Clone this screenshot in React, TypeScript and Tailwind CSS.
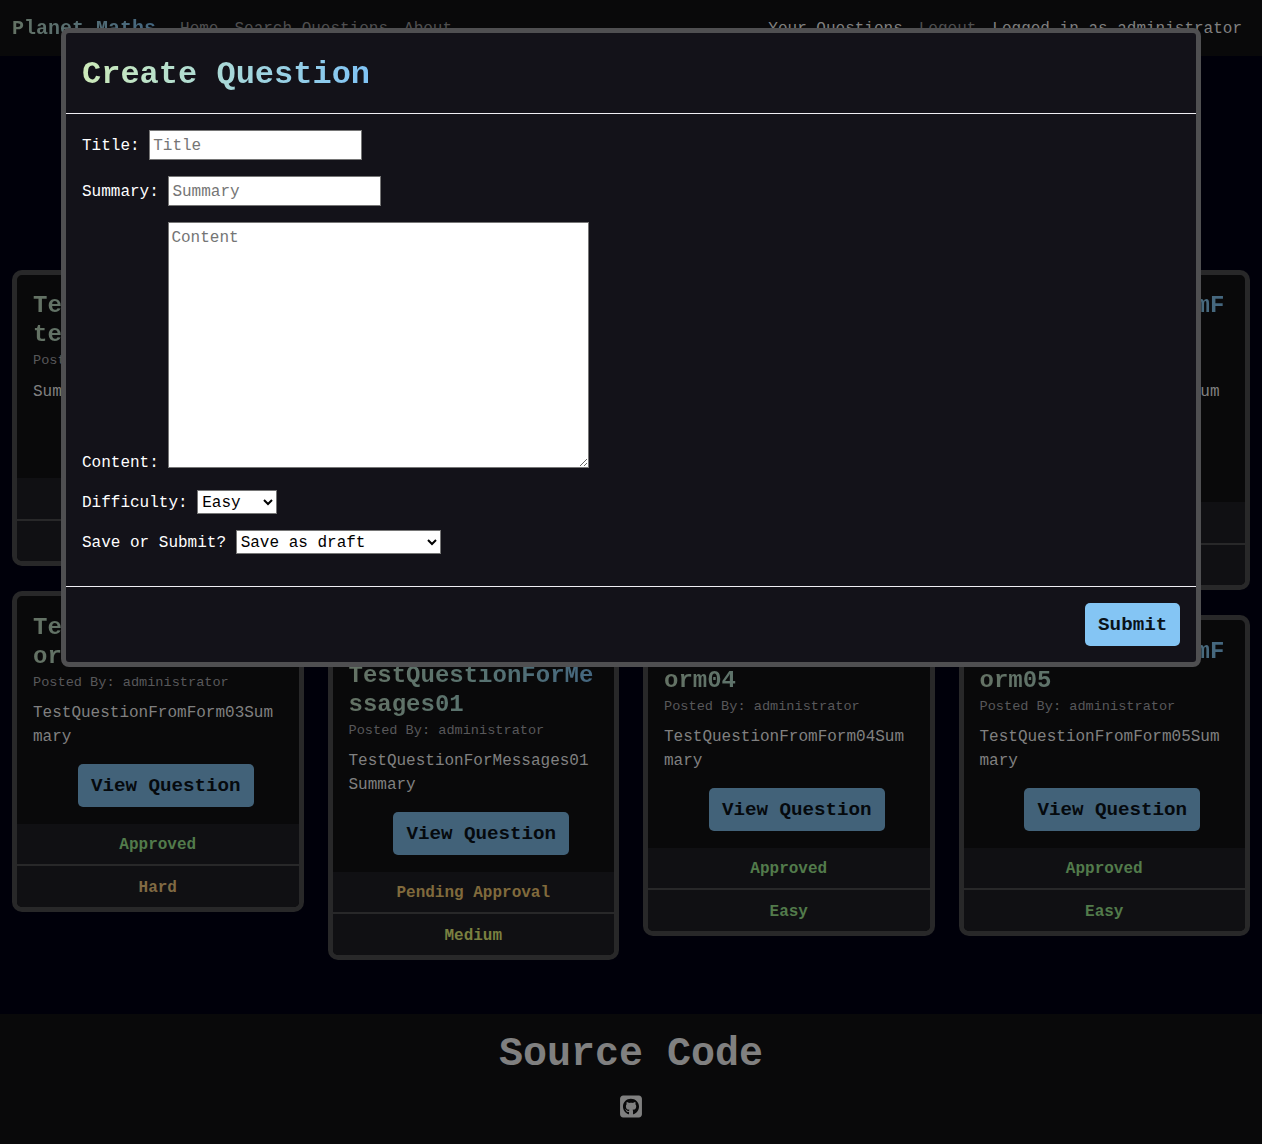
import { FaSquareGithub } from "react-icons/fa6";

type Question = {
  title: string;
  summary: string;
  status: string;
  level: string;
};

const columns: Question[][] = [
  [
    { title: "TestQuestionUpda test", summary: "Summary", status: "Approved", level: "Easy" },
    { title: "TestQuestionFromForm03", summary: "TestQuestionFromForm03Summary", status: "Approved", level: "Hard" },
  ],
  [
    {
      title: "TestQuestionFromForm01",
      summary: "TestQuestionFromForm01Summary for the first question",
      status: "Approved",
      level: "Easy",
    },
    {
      title: "TestQuestionForMessages01",
      summary: "TestQuestionForMessages01 Summary",
      status: "Pending Approval",
      level: "Medium",
    },
  ],
  [
    { title: "TestQuestionFromForm02", summary: "TestQuestionFromForm02Summary", status: "Approved", level: "Easy" },
    { title: "TestQuestionFromForm04", summary: "TestQuestionFromForm04Summary", status: "Approved", level: "Easy" },
  ],
  [
    { title: "TestQuestionFromForm", summary: "TestQuestionFromForm00Summary", status: "Approved", level: "Easy" },
    { title: "TestQuestionFromForm05", summary: "TestQuestionFromForm05Summary", status: "Approved", level: "Easy" },
  ],
];

const tones: Record<string, string> = {
  Approved: "text-[#527b4b]",
  Easy: "text-[#527b4b]",
  Medium: "text-[#7a8040]",
  Hard: "text-[#806a43]",
  "Pending Approval": "text-[#806a3c]",
};

function QuestionCard({ q }: { q: Question }) {
  return (
    <article className="overflow-hidden rounded-[10px] border-[5px] border-[#282829] bg-[#09090a]">
      <div className="px-4 pt-4 pb-[16.8px]">
        <h5 className="h-[57.6px] break-all bg-linear-to-r from-[#647264] via-[#59736f] to-[#436680] bg-clip-text pt-[1.4px] text-2xl leading-[28.8px] font-bold text-transparent">
          {q.title}
        </h5>
        <h6 className="h-[31.4px] pt-[0.8px] text-[13.6px] leading-6 text-[#58585a]">Posted By: administrator</h6>
        <p className="mb-[14.6px] break-all text-[#808080]">{q.summary}</p>
        <div className="flex justify-center pl-4">
          <button className="h-[43px] rounded-[5px] bg-[#426279] px-[13px] pt-[2px] text-[19.2px] font-bold text-[#05090d]">
            View Question
          </button>
        </div>
      </div>
      <div className={`flex h-[40.3px] items-center justify-center bg-[#101013] pt-[2px] font-bold ${tones[q.status]}`}>
        {q.status}
      </div>
      <div
        className={`flex h-[42.7px] items-center justify-center border-t-2 border-[#282829] bg-[#101013] pt-[4px] font-bold ${tones[q.level]}`}
      >
        {q.level}
      </div>
    </article>
  );
}

function Navbar() {
  return (
    <nav className="flex h-14 items-center justify-between bg-[#09090a] pt-[2px] pr-5 pl-3 text-[#4f4f50]">
      <div className="flex items-center gap-4">
        <span className="mr-2 bg-linear-to-r from-[#647264] to-[#436680] bg-clip-text text-xl font-bold text-transparent">
          Planet Maths
        </span>
        <a>Home</a>
        <a>Search Questions</a>
        <a>About</a>
      </div>
      <div className="flex items-center gap-4">
        <a className="text-[#808080]">Your Questions</a>
        <a>Logout</a>
        <span className="text-[#808080]">Logged in as administrator</span>
      </div>
    </nav>
  );
}

function CreateQuestionDialog() {
  const field = "border border-[#767676] bg-white text-black placeholder:text-[#757575] outline-none";
  return (
    <div className="fixed inset-0 flex items-start justify-center pt-7">
      <div
        role="dialog"
        className="w-[1140px] rounded-lg border-[5px] border-[#4f4f51] bg-[#131219] text-white"
      >
        <header className="flex h-[81px] items-center border-b border-[#f0eef4] px-4 pt-1">
          <h1 className="bg-linear-to-r from-[#cdeab9] via-[#a8d8d8] to-[#7fc3f5] bg-clip-text text-[32px] leading-[48px] font-bold text-transparent">
            Create Question
          </h1>
        </header>
        <form className="flex h-[472px] flex-col gap-4 p-4">
          <div className="flex h-[30px] items-center gap-[9.6px]">
            <label htmlFor="title" className="pt-[2px]">Title:</label>
            <input id="title" placeholder="Title" className={`h-[30px] w-[213px] px-[3px] pt-[2px] ${field}`} />
          </div>
          <div className="flex h-[30px] items-center gap-[9.6px]">
            <label htmlFor="summary" className="pt-[2px]">Summary:</label>
            <input id="summary" placeholder="Summary" className={`h-[30px] w-[213px] px-[3px] pt-[2px] ${field}`} />
          </div>
          <div className="flex h-[252px] items-end gap-[9.6px]">
            <label htmlFor="content" className="-mb-px">Content:</label>
            <textarea
              id="content"
              placeholder="Content"
              className={`h-[246px] w-[421px] resize self-start px-[2px] pt-[3px] ${field}`}
            />
          </div>
          <div className="flex h-6 items-center gap-[9.6px]">
            <label htmlFor="difficulty" className="pt-[2px]">Difficulty:</label>
            <select id="difficulty" className={`h-6 w-20 pt-px ${field}`}>
              <option>Easy</option>
              <option>Medium</option>
              <option>Hard</option>
            </select>
          </div>
          <div className="flex h-6 items-center gap-[9.6px]">
            <label htmlFor="action" className="pt-[2px]">Save or Submit?</label>
            <select id="action" className={`h-6 w-[205px] pt-px ${field}`}>
              <option>Save as draft</option>
              <option>Submit for approval</option>
            </select>
          </div>
        </form>
        <footer className="flex justify-end border-t border-[#f0eef4] p-4">
          <button className="h-[43px] rounded-[5px] bg-[#84c5f4] px-[12.8px] text-[19.2px] font-bold text-[#0a1219]">
            Submit
          </button>
        </footer>
      </div>
    </div>
  );
}

export default function App() {
  return (
    <div className="flex h-[1144px] flex-col overflow-hidden bg-[#00000a] font-['Liberation_Mono',monospace] text-base leading-6">
      <Navbar />
      <main className="grid grow grid-cols-4 items-start gap-6 px-3 pt-[214px]">
        {columns.map((cards, i) => (
          <div key={i} className="flex min-w-0 flex-col gap-[25px]">
            {cards.map((q) => (
              <QuestionCard key={q.title} q={q} />
            ))}
          </div>
        ))}
      </main>
      <footer className="flex h-[130px] shrink-0 flex-col items-center bg-[#09090a] pt-[17px] text-[#808080]">
        <h1 className="mb-[15px] text-[40px] leading-[48px] font-bold">Source Code</h1>
        <FaSquareGithub className="h-[25px] w-[22px]" />
      </footer>
      <CreateQuestionDialog />
    </div>
  );
}
